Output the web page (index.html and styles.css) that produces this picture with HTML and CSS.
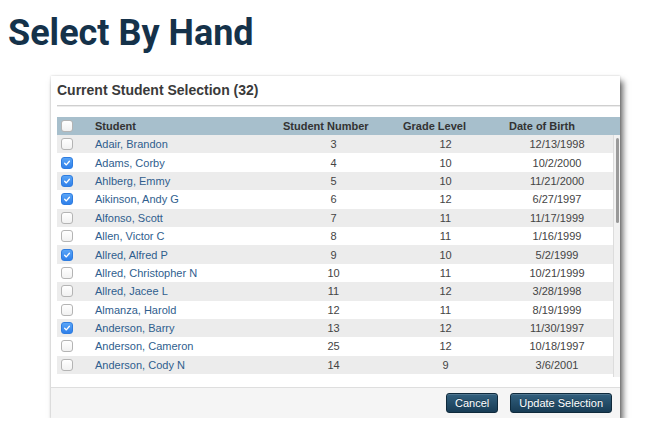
FILE: index.html
```html
<!DOCTYPE html>
<html>
<head>
<meta charset="utf-8">
<link rel="stylesheet" href="styles.css">
</head>
<body>
<h1 class="page-title">Select By Hand</h1>
<div class="dialog">
  <div class="dialog-title">Current Student Selection (32)</div>
  <div class="rule"></div>
  <div class="table">
    <div class="row head">
      <div class="c-check"><span class="cb"></span></div>
      <div class="c-name">Student</div>
      <div class="c-num">Student Number</div>
      <div class="c-grade">Grade Level</div>
      <div class="c-dob">Date of Birth</div>
    </div>
    <div class="scroll">
      <div class="rows">
        <div class="row"><div class="c-check"><span class="cb"></span></div><div class="c-name">Adair, Brandon</div><div class="c-num">3</div><div class="c-grade">12</div><div class="c-dob">12/13/1998</div></div>
        <div class="row"><div class="c-check"><span class="cb on"><svg viewBox="0 0 12 12"><path d="M3.2 6.3 L5.2 8.3 L8.9 3.9"/></svg></span></div><div class="c-name">Adams, Corby</div><div class="c-num">4</div><div class="c-grade">10</div><div class="c-dob">10/2/2000</div></div>
        <div class="row"><div class="c-check"><span class="cb on"><svg viewBox="0 0 12 12"><path d="M3.2 6.3 L5.2 8.3 L8.9 3.9"/></svg></span></div><div class="c-name">Ahlberg, Emmy</div><div class="c-num">5</div><div class="c-grade">10</div><div class="c-dob">11/21/2000</div></div>
        <div class="row"><div class="c-check"><span class="cb on"><svg viewBox="0 0 12 12"><path d="M3.2 6.3 L5.2 8.3 L8.9 3.9"/></svg></span></div><div class="c-name">Aikinson, Andy G</div><div class="c-num">6</div><div class="c-grade">12</div><div class="c-dob">6/27/1997</div></div>
        <div class="row"><div class="c-check"><span class="cb"></span></div><div class="c-name">Alfonso, Scott</div><div class="c-num">7</div><div class="c-grade">11</div><div class="c-dob">11/17/1999</div></div>
        <div class="row"><div class="c-check"><span class="cb"></span></div><div class="c-name">Allen, Victor C</div><div class="c-num">8</div><div class="c-grade">11</div><div class="c-dob">1/16/1999</div></div>
        <div class="row"><div class="c-check"><span class="cb on"><svg viewBox="0 0 12 12"><path d="M3.2 6.3 L5.2 8.3 L8.9 3.9"/></svg></span></div><div class="c-name">Allred, Alfred P</div><div class="c-num">9</div><div class="c-grade">10</div><div class="c-dob">5/2/1999</div></div>
        <div class="row"><div class="c-check"><span class="cb"></span></div><div class="c-name">Allred, Christopher N</div><div class="c-num">10</div><div class="c-grade">11</div><div class="c-dob">10/21/1999</div></div>
        <div class="row"><div class="c-check"><span class="cb"></span></div><div class="c-name">Allred, Jacee L</div><div class="c-num">11</div><div class="c-grade">12</div><div class="c-dob">3/28/1998</div></div>
        <div class="row"><div class="c-check"><span class="cb"></span></div><div class="c-name">Almanza, Harold</div><div class="c-num">12</div><div class="c-grade">11</div><div class="c-dob">8/19/1999</div></div>
        <div class="row"><div class="c-check"><span class="cb on"><svg viewBox="0 0 12 12"><path d="M3.2 6.3 L5.2 8.3 L8.9 3.9"/></svg></span></div><div class="c-name">Anderson, Barry</div><div class="c-num">13</div><div class="c-grade">12</div><div class="c-dob">11/30/1997</div></div>
        <div class="row"><div class="c-check"><span class="cb"></span></div><div class="c-name">Anderson, Cameron</div><div class="c-num">25</div><div class="c-grade">12</div><div class="c-dob">10/18/1997</div></div>
        <div class="row"><div class="c-check"><span class="cb"></span></div><div class="c-name">Anderson, Cody N</div><div class="c-num">14</div><div class="c-grade">9</div><div class="c-dob">3/6/2001</div></div>
      </div>
      <div class="track"><div class="thumb"></div></div>
    </div>
  </div>
  <div class="footer">
    <button class="btn">Cancel</button>
    <button class="btn">Update Selection</button>
  </div>
</div>
</body>
</html>
```
FILE: styles.css
```css
html, body {
  margin: 0;
  padding: 0;
  background: #ffffff;
}
body {
  font-family: "Liberation Sans", Arial, sans-serif;
}
.page-title {
  margin: 12px 0 22px 8px;
  font-family: Roboto, "Liberation Sans", sans-serif;
  font-weight: 700;
  font-size: 36px;
  line-height: 42px;
  color: #15324a;
}
.dialog {
  margin-left: 51px;
  width: 569px;
  height: 342px;
  background: #fff;
  box-shadow: 3px 5px 6px rgba(0, 0, 0, 0.6), 0 0 2px rgba(0, 0, 0, 0.2);
  display: flex;
  flex-direction: column;
}
.dialog-title {
  padding: 6px 0 0 6px;
  font-size: 14px;
  line-height: 16px;
  font-weight: 700;
  color: #3a3a3a;
}
.rule {
  margin: 7px 0 0 6px;
  border-top: 1px solid #cfcfcf;
  border-bottom: 1px solid #ececec;
}
.table {
  margin: 10px 0 0 6px;
  font-size: 11px;
}
.row {
  display: grid;
  grid-template-columns: 35px 188px 120px 106px 1fr;
  align-items: center;
  height: 18.4px;
  color: #444;
}
.row.head {
  height: 18px;
  background: #a7bfcc;
  font-weight: 700;
  color: #333;
}
.row.head .c-num,
.row.head .c-grade,
.row.head .c-dob {
  text-align: left;
  padding: 0 0 0 3px;
}
.c-check {
  padding-left: 4px;
  display: flex;
  align-items: center;
}
.c-name {
  padding-left: 3px;
  white-space: nowrap;
}
.rows .c-name {
  color: #2f5e8e;
}
.c-num {
  text-align: center;
  padding-right: 13px;
}
.c-grade {
  text-align: center;
  padding-right: 15px;
}
.c-dob {
  text-align: center;
  padding-right: 5px;
}
.scroll {
  display: flex;
  height: 242px;
}
.rows {
  flex: 1;
}
.rows .row:nth-child(odd) {
  background: #ececec;
}
.track {
  width: 6px;
  border-left: 1px solid #dcdcdc;
  background: #f2f2f2;
}
.thumb {
  margin: 3px 0 0 2px;
  width: 3px;
  height: 85px;
  border-radius: 2px;
  background: #9a9a9a;
}
.cb {
  box-sizing: border-box;
  width: 12px;
  height: 12px;
  border: 1px solid #b4b4b4;
  border-radius: 3px;
  background: linear-gradient(#ffffff, #f1f1f1);
  display: block;
}
.cb.on {
  border-color: #2f7de0;
  background: linear-gradient(#5aa5f7, #2f80ea);
}
.cb svg {
  display: block;
  width: 10px;
  height: 10px;
}
.cb svg path {
  fill: none;
  stroke: #fff;
  stroke-width: 1.6;
  stroke-linecap: round;
  stroke-linejoin: round;
}
.footer {
  margin-top: 10px;
  flex: 1;
  border-top: 1px solid #dedede;
  background: #f5f5f5;
  display: flex;
  justify-content: flex-end;
  align-items: flex-start;
  gap: 12px;
  padding: 5px 8px 0 0;
}
.btn {
  height: 20px;
  padding: 0 8px;
  font-family: "Liberation Sans", Arial, sans-serif;
  font-size: 11px;
  color: #fff;
  border: 1px solid #0f2a3c;
  border-radius: 3px;
  background: linear-gradient(#32607e, #183c55);
  box-shadow: inset 0 1px 0 rgba(255, 255, 255, 0.15);
  text-shadow: 0 -1px 0 rgba(0, 0, 0, 0.3);
}
```
